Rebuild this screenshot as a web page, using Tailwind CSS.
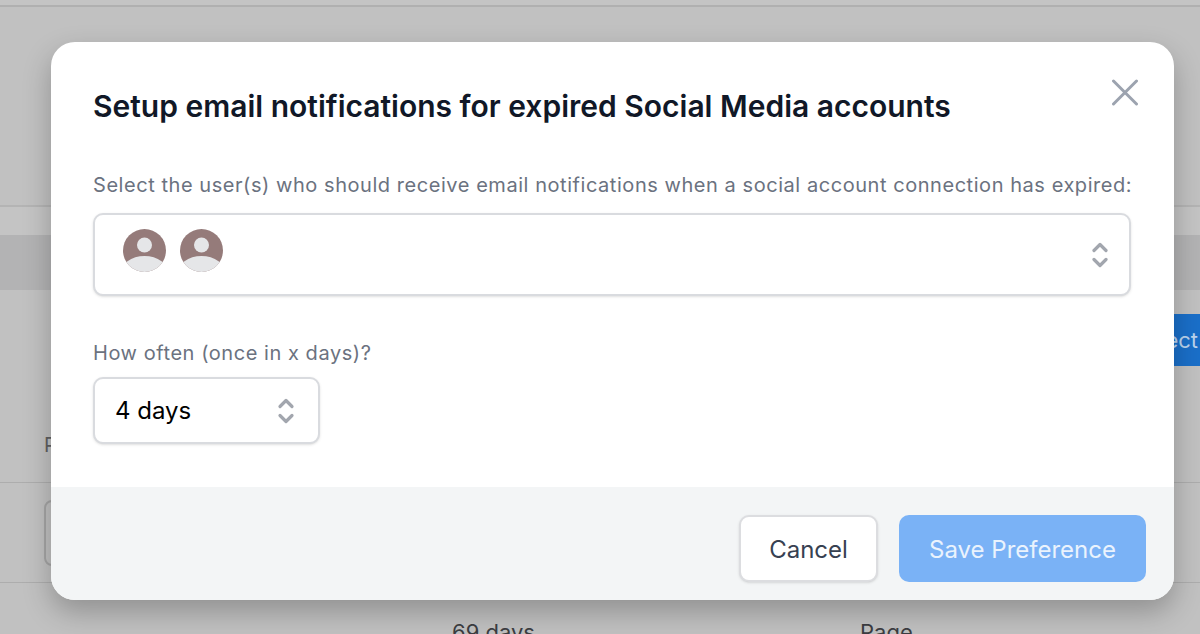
<!DOCTYPE html>
<html>
<head>
<meta charset="utf-8">
<script src="https://cdn.jsdelivr.net/npm/@tailwindcss/browser@4"></script>
</head>
<body class="m-0 p-0">
<div class="relative w-[1200px] h-[634px] overflow-hidden bg-[#c1c1c1] font-['Inter',sans-serif]">
  <!-- dimmed page -->
  <div class="flex flex-col h-full text-[20px] text-[#3f3f42]">
    <div class="h-[7px] shrink-0 border-b-2 border-[#b0b0b0] bg-[#c4c4c4]"></div>
    <div class="h-[200px] shrink-0 border-b-2 border-[#b4b4b4]"></div>
    <div class="h-[28px] shrink-0 bg-[#c4c4c4]"></div>
    <div class="h-[55px] shrink-0 bg-[#b3b3b4]"></div>
    <div class="h-[24px] shrink-0"></div>
    <div class="h-[52px] shrink-0 flex justify-end">
      <div class="w-[120px] bg-[#1a6fc9] text-[#bcd4ee] pr-[2px] text-right leading-[52px] text-[22px]">Connect</div>
    </div>
    <div class="h-[117px] shrink-0 border-b border-[#adadad] pl-[44px] pt-[64px] leading-[30px] text-[#5f5f61]">Platform</div>
    <div class="h-[100px] shrink-0 border-b border-[#adadad] pl-[44px] pt-[17px]">
      <div class="w-[60px] h-[66px] rounded-lg border-2 border-[#a5a5a5]"></div>
    </div>
    <div class="flex shrink-0 pt-[35px] leading-[28px] text-[22px] text-[#3c3d42]">
      <span class="ml-[452px] w-[408px]">69 days</span><span>Page</span>
    </div>
  </div>

  <!-- modal -->
  <div class="absolute left-[51px] top-[42px] w-[1123px] h-[558px] rounded-[24px] overflow-hidden bg-white flex flex-col shadow-[0_12px_28px_rgba(0,0,0,0.25)]">
    <div class="relative h-[445px] shrink-0 pl-[42px] pr-[43px]">
      <h2 class="m-0 pt-[44px] text-[30px] leading-[40px] font-semibold text-[#111827] whitespace-nowrap">Setup email notifications for expired Social Media accounts</h2>
      <button class="absolute right-[35px] top-[36px] w-[28px] h-[28px] p-0 bg-transparent border-0">
        <svg viewBox="0 0 28 28" class="w-[28px] h-[28px]" fill="none" stroke="#9ca3af" stroke-width="3" stroke-linecap="round"><path d="M2.500 3 25.500 26M25.500 3 2.500 26"/></svg>
      </button>
      <p class="m-0 mt-[45px] text-[20px] leading-[28px] tracking-[0.55px] text-[#6b7280] whitespace-nowrap">Select the user(s) who should receive email notifications when a social account connection has expired:</p>
      <div class="mt-[14px] h-[83px] rounded-[10px] border-2 border-[#d9dbdf] bg-white flex items-center pl-[28px] pr-[19px] shadow-sm">
        <div class="flex gap-[14px] -mt-[9px]">
          <svg viewBox="0 0 43 43" class="w-[43px] h-[43px]"><defs><clipPath id="a"><circle cx="21.500" cy="21.500" r="21.500"/></clipPath></defs><g clip-path="url(#a)"><rect width="43" height="43" fill="#957b7a"/><circle cx="21.500" cy="16" r="7.500" fill="#e5e6e8"/><ellipse cx="21.500" cy="45" rx="24" ry="18" fill="#e5e6e8"/></g></svg>
          <svg viewBox="0 0 43 43" class="w-[43px] h-[43px]"><defs><clipPath id="b"><circle cx="21.500" cy="21.500" r="21.500"/></clipPath></defs><g clip-path="url(#b)"><rect width="43" height="43" fill="#957b7a"/><circle cx="21.500" cy="16" r="7.500" fill="#e5e6e8"/><ellipse cx="21.500" cy="45" rx="24" ry="18" fill="#e5e6e8"/></g></svg>
        </div>
        <svg viewBox="0 0 20 30" class="ml-auto w-[20px] h-[30px]" fill="none" stroke="#a2a6ae" stroke-width="3.200" stroke-linecap="round" stroke-linejoin="round"><path d="M4 10.500 10 4.500 16 10.500M4 19.500 10 25.500 16 19.500"/></svg>
      </div>
      <p class="m-0 mt-[43px] text-[20px] leading-[28px] tracking-[0.55px] text-[#6b7280]">How often (once in x days)?</p>
      <div class="mt-[10px] w-[227px] h-[67px] pt-[1px] rounded-[10px] border-2 border-[#d9dbdf] bg-white flex items-center pl-[20px] pr-[22px] shadow-sm">
        <span class="text-[24px] text-black">4 days</span>
        <svg viewBox="0 0 20 30" class="ml-auto w-[20px] h-[30px]" fill="none" stroke="#a2a6ae" stroke-width="3.200" stroke-linecap="round" stroke-linejoin="round"><path d="M4 10.500 10 4.500 16 10.500M4 19.500 10 25.500 16 19.500"/></svg>
      </div>
    </div>
    <div class="flex-1 bg-[#f3f5f6] flex justify-end items-start pt-[28px] pr-[28px] gap-[21px]">
      <button class="w-[139px] h-[67px] pt-[2px] rounded-[10px] border-2 border-[#dcdde0] bg-white text-[24px] text-[#374151] shadow-sm">Cancel</button>
      <button class="w-[247px] h-[67px] pt-[2px] rounded-[10px] bg-[#7ab2f6] text-[24px] text-[#eaf3fd]">Save Preference</button>
    </div>
  </div>
</div>
</body>
</html>
